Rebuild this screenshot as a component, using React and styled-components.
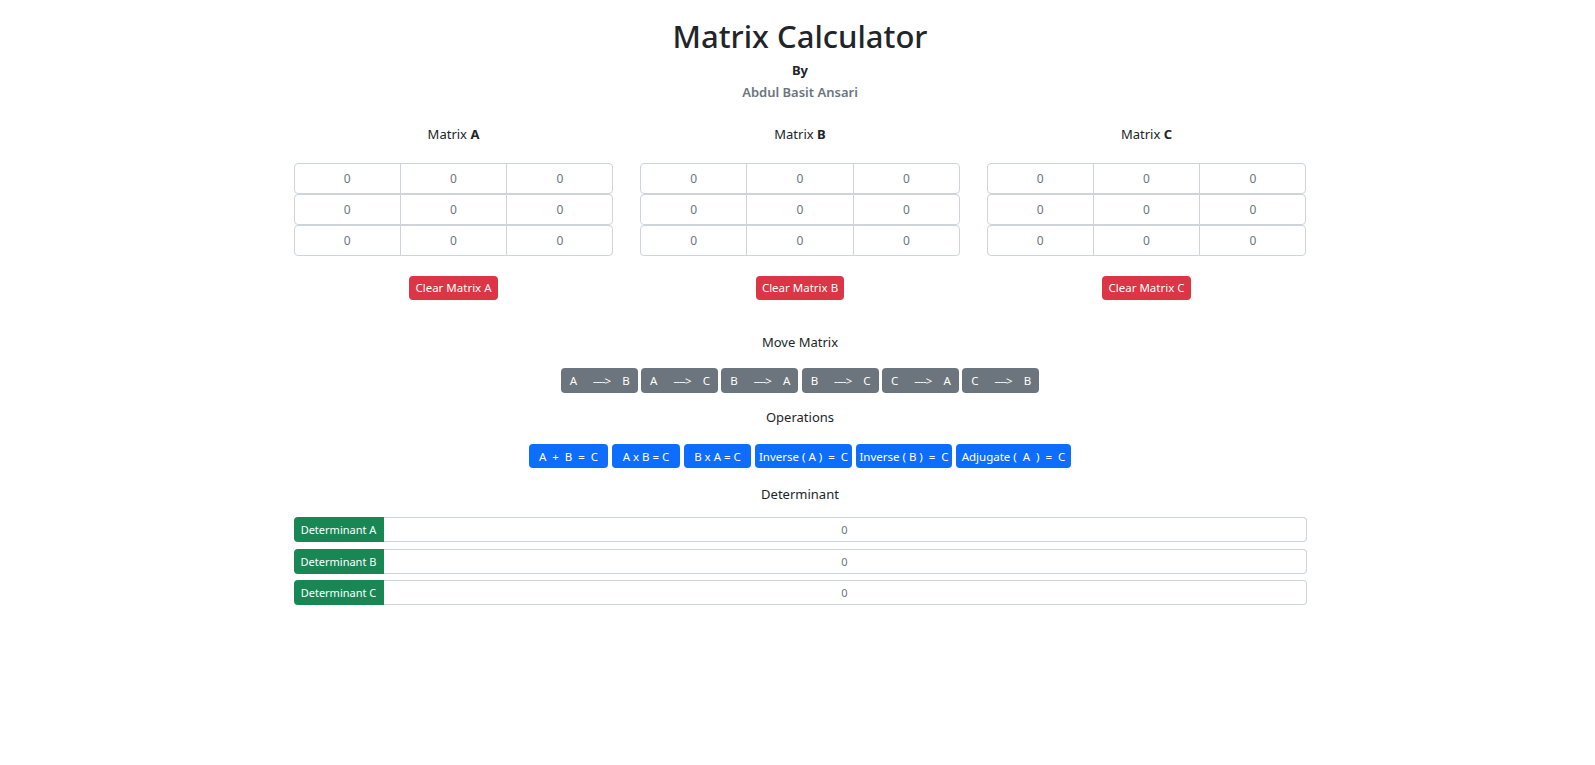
import styled, { createGlobalStyle } from "styled-components";

const GlobalStyle = createGlobalStyle`
  body {
    margin: 0;
    padding-left: 5px;
    background: #fff;
    color: #212529;
    font-family: "Noto Sans", "Open Sans", sans-serif;
  }
  * { box-sizing: border-box; }
`;

const Page = styled.main`
  width: 1013px;
  margin: 0 auto;
  padding-top: 17px;
  text-align: center;
`;

const Title = styled.h1`
  margin: 0;
  font-size: 31px;
  font-weight: 500;
  line-height: 38.4px;
`;

const By = styled.p`
  margin: 6px 0 0;
  font-size: 13px;
  font-weight: 700;
  line-height: 19.5px;
`;

const Author = styled.p`
  margin: 2.5px 0 0;
  font-size: 13px;
  font-weight: 600;
  line-height: 19.5px;
  color: #6c757d;
`;

const MatrixRow = styled.section`
  display: grid;
  grid-template-columns: repeat(3, minmax(0, 1fr));
  column-gap: 26.5px;
  margin-top: 22.5px;
`;

const MatrixCol = styled.div`
  display: flex;
  flex-direction: column;
  align-items: center;
  min-width: 0;
`;

const Heading = styled.h6`
  margin: ${(p) => p.$top || 0}px 0 0;
  font-size: 13px;
  font-weight: 400;
  line-height: 19.5px;

  b {
    font-weight: 700;
  }
`;

const CellGrid = styled.div`
  width: 100%;
  margin-top: 18.5px;
`;

const CellRow = styled.div`
  display: flex;
  height: 31px;
`;

const Cell = styled.input`
  flex: 1 1 0;
  width: 0;
  min-width: 0;
  height: 100%;
  border: 1px solid #ced4da;
  border-radius: 0;
  background: #fff;
  text-align: center;
  font-family: inherit;
  font-size: 12px;
  color: #6c757d;
  outline: none;

  & + & {
    margin-left: -1px;
  }
  &:first-child {
    border-radius: 4px 0 0 4px;
  }
  &:last-child {
    border-radius: 0 4px 4px 0;
  }
`;

const Btn = styled.button`
  height: ${(p) => p.$h || 24}px;
  padding: 0 8px;
  border: none;
  border-radius: 4px;
  font-family: inherit;
  font-size: 11.5px;
  color: #fff;
  white-space: pre;
  cursor: pointer;
  background: ${(p) => p.$bg};
`;

const ClearButton = styled(Btn)`
  margin-top: 19.5px;
  min-width: 86px;
  padding: 0 6px;
`;

const ButtonBar = styled.div`
  display: flex;
  justify-content: center;
  gap: ${(p) => p.$gap}px;
  margin-top: 16px;
`;

const MoveButton = styled(Btn)`
  display: flex;
  align-items: center;
  justify-content: space-between;
  width: 77px;
  padding: 0 8px 0 9px;
`;

const Arrow = styled.span`
  margin-left: 4px;
  letter-spacing: -0.8px;
`;

const OpButton = styled(Btn)`
  width: ${(p) => p.$w}px;
  padding: 0;
`;

const DetList = styled.div`
  display: flex;
  flex-direction: column;
  gap: 6.5px;
  margin-top: 12.5px;
`;

const DetRow = styled.div`
  display: flex;
  height: 25px;
`;

const DetLabel = styled.span`
  display: flex;
  align-items: center;
  justify-content: center;
  flex: none;
  width: 90px;
  background: #198754;
  color: #fff;
  font-size: 11px;
  white-space: nowrap;
  border-radius: 4px 0 0 4px;
`;

const DetValue = styled.input`
  flex: 1 1 0;
  width: 0;
  min-width: 0;
  border: 1px solid #ced4da;
  border-left: none;
  border-radius: 0 4px 4px 0;
  text-align: center;
  font-family: inherit;
  font-size: 11px;
  color: #6c757d;
  outline: none;
`;

const matrices = ["A", "B", "C"];

const moves = [
  ["A", "B"],
  ["A", "C"],
  ["B", "A"],
  ["B", "C"],
  ["C", "A"],
  ["C", "B"],
];

const operations = [
  { label: "A  +  B  =  C", w: 79 },
  { label: "A x B = C", w: 68 },
  { label: "B x A = C", w: 67 },
  { label: "Inverse ( A )  =  C", w: 97 },
  { label: "Inverse ( B )  =  C", w: 96 },
  { label: "Adjugate (  A  )  =  C", w: 115 },
];

function Matrix({ name }) {
  return (
    <MatrixCol>
      <Heading>
        Matrix <b>{name}</b>
      </Heading>
      <CellGrid>
        {[0, 1, 2].map((r) => (
          <CellRow key={r}>
            {[0, 1, 2].map((c) => (
              <Cell key={c} defaultValue="0" />
            ))}
          </CellRow>
        ))}
      </CellGrid>
      <ClearButton $bg="#dc3545">Clear Matrix {name}</ClearButton>
    </MatrixCol>
  );
}

export default function App() {
  return (
    <>
      <GlobalStyle />
      <Page>
        <Title>Matrix Calculator</Title>
        <By>By</By>
        <Author>Abdul Basit Ansari</Author>

        <MatrixRow>
          {matrices.map((m) => (
            <Matrix key={m} name={m} />
          ))}
        </MatrixRow>

        <Heading $top={33}>Move Matrix</Heading>
        <ButtonBar $gap={3.3}>
          {moves.map(([from, to]) => (
            <MoveButton key={from + to} $bg="#6c757d" $h={25}>
              <span>{from}</span>
              <Arrow>----&gt;</Arrow>
              <span>{to}</span>
            </MoveButton>
          ))}
        </ButtonBar>

        <Heading $top={15}>Operations</Heading>
        <ButtonBar $gap={4}>
          {operations.map((op) => (
            <OpButton key={op.label} $bg="#0d6efd" $w={op.w} $h={24.5}>
              {op.label}
            </OpButton>
          ))}
        </ButtonBar>

        <Heading $top={17}>Determinant</Heading>
        <DetList>
          {matrices.map((m) => (
            <DetRow key={m}>
              <DetLabel>Determinant {m}</DetLabel>
              <DetValue defaultValue="0" />
            </DetRow>
          ))}
        </DetList>
      </Page>
    </>
  );
}
